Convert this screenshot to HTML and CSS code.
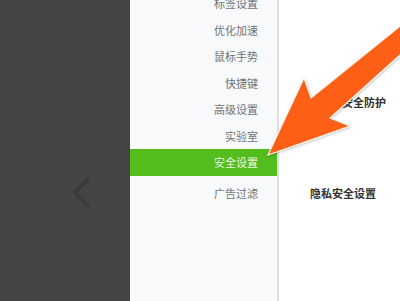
FILE: index.html
```html
<!DOCTYPE html>
<html lang="zh-CN">
<head>
    <meta charset="UTF-8">
    <meta name="viewport" content="width=device-width, initial-scale=1.0">
    <title>设置</title>
    <link rel="stylesheet" href="styles.css">
</head>
<body>
    <aside class="backdrop">
        <svg class="chevron" width="20" height="32" viewBox="0 0 20 32">
            <path d="M15 2 L2 15.5 L15 29" fill="none" stroke="#3a3a3a" stroke-width="3.5" stroke-linecap="round" stroke-linejoin="round"/>
        </svg>
    </aside>

    <nav class="sidebar">
        <ul class="menu">
            <li>标签设置</li>
            <li>优化加速</li>
            <li>鼠标手势</li>
            <li>快捷键</li>
            <li>高级设置</li>
            <li>实验室</li>
            <li class="active">安全设置</li>
            <li class="group-start">广告过滤</li>
        </ul>
    </nav>

    <main class="content">
        <h3 class="section-title protect">安全防护</h3>
        <h3 class="section-title privacy">隐私安全设置</h3>
    </main>

    <!-- annotation arrow drawn over the page -->
    <svg class="arrow" width="400" height="301" viewBox="0 0 400 301">
        <defs>
            <filter id="shadow" x="-10%" y="-10%" width="120%" height="120%">
                <feDropShadow dx="0.5" dy="1" stdDeviation="0.8" flood-color="#000" flood-opacity="0.25"/>
            </filter>
        </defs>
        <polygon points="268,155 304,78 311,98 420,10 420,37 330,118 350,126"
                 fill="#fd5e12" stroke="#fff4ea" stroke-width="1.2" stroke-linejoin="miter" filter="url(#shadow)"/>
    </svg>
</body>
</html>
```

FILE: styles.css
```css
/* Reset some default styles */
body, h3, ul, li {
    margin: 0;
    padding: 0;
}

body {
    display: flex;
    width: 400px;
    height: 301px;
    overflow: hidden;
    position: relative;
    font-family: "Noto Sans CJK SC", "Microsoft YaHei", sans-serif;
    background-color: #fff;
}

.backdrop {
    width: 130px;
    flex-shrink: 0;
    background-color: #444444;
    padding: 177px 0 0 73px;
    box-sizing: border-box;
}

.sidebar {
    width: 147px;
    flex-shrink: 0;
    background-color: #f7f9fa;
    border-right: 2px solid #dedfe0;
}

.menu {
    list-style: none;
    margin-top: -10px;
}

.menu li {
    height: 26.5px;
    line-height: 26.5px;
    padding-right: 19px;
    text-align: right;
    font-size: 11px;
    color: #707478;
}

.menu li.active {
    background-color: #53bd1e;
    color: #eef8e6;
}

.menu li.group-start {
    margin-top: 4px;
}

.content {
    flex: 1;
    position: relative;
}

.section-title {
    font-size: 11px;
    font-weight: bold;
    color: #333;
    line-height: 16px;
}

.protect {
    margin: 94px 0 0 63px;
}

.privacy {
    margin: 75px 0 0 31px;
}

.arrow {
    position: absolute;
    left: 0;
    top: 0;
    pointer-events: none;
}
```
